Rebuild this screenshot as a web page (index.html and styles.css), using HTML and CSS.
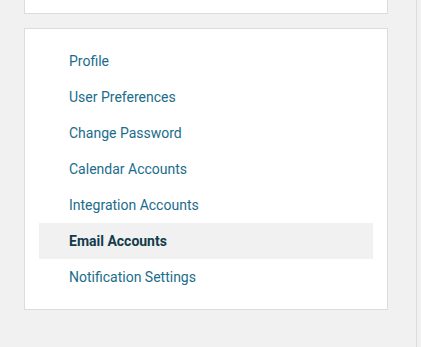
FILE: index.html
```html
<!DOCTYPE html>
<html lang="en">
<head>
  <meta charset="UTF-8">
  <title>Settings</title>
  <link rel="stylesheet" href="styles.css">
</head>
<body>

<div class="page">
  <div class="content">
    <!-- Previous panel, scrolled mostly out of view -->
    <div class="card card-top"></div>

    <!-- Settings menu -->
    <div class="card">
      <ul class="settings-menu">
        <li><a href="#">Profile</a></li>
        <li><a href="#">User Preferences</a></li>
        <li><a href="#">Change Password</a></li>
        <li><a href="#">Calendar Accounts</a></li>
        <li><a href="#">Integration Accounts</a></li>
        <li class="active"><a href="#">Email Accounts</a></li>
        <li><a href="#">Notification Settings</a></li>
      </ul>
    </div>
  </div>
  <div class="side"></div>
</div>

</body>
</html>
```

FILE: styles.css
```css
html, body { margin: 0; height: 100%; }
body { font-family: Roboto, "Liberation Sans", sans-serif; background-color: #f1f1f1; }

.page { display: flex; height: 100%; }
.content {
  width: 364px;
  padding: 0 28px 0 24px;
  border-right: 1px solid #dcdcdc;
  display: flex;
  flex-direction: column;
  gap: 14px;
}
.side { flex: 1; }

.card {
  background: white;
  border: 1px solid #dcdcdc;
}
.card-top { border-top: none; height: 13px; }

/* Settings menu */
.settings-menu {
  list-style: none;
  margin: 0;
  padding: 14px;
}
.settings-menu li a {
  display: flex;
  align-items: center;
  height: 36px;
  padding-left: 30px;
  font-size: 14px;
  color: #1a6c8b;
  text-decoration: none;
}
.settings-menu li.active a {
  background: #f1f1f1;
  color: #133b4a;
  font-weight: bold;
}
```
